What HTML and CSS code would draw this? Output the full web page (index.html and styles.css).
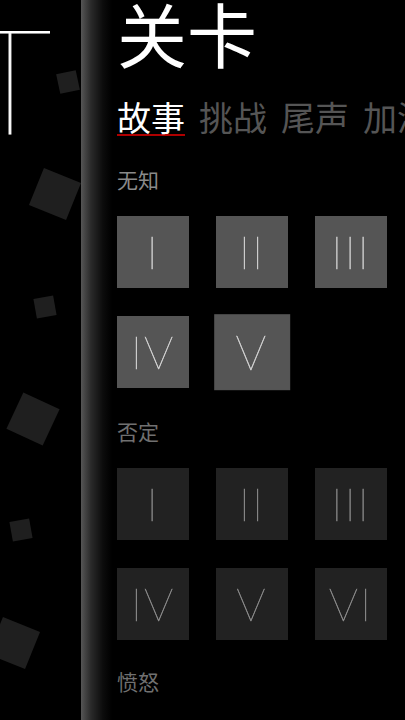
FILE: index.html
```html
<!DOCTYPE html>
<html lang="zh-CN">
<head>
<meta charset="utf-8">
<title>关卡</title>
<link rel="stylesheet" href="styles.css">
</head>
<body>
<div class="app">
  <aside class="canvas">
    <div class="logo">T</div>
    <div class="sq sq-a"></div>
    <div class="sq sq-b"></div>
    <div class="sq sq-c"></div>
    <div class="sq sq-d"></div>
    <div class="sq sq-e"></div>
    <div class="sq sq-f"></div>
  </aside>
  <main class="panel">
    <h1 class="title">关卡</h1>
    <nav class="tabs">
      <span class="tab active">故事</span>
      <span class="tab">挑战</span>
      <span class="tab">尾声</span>
      <span class="tab">加演</span>
    </nav>
    <section class="group">
      <h2 class="label">无知</h2>
      <div class="grid">
        <div class="tile">I</div>
        <div class="tile">II</div>
        <div class="tile">III</div>
        <div class="tile">IV</div>
        <div class="tile current">V</div>
      </div>
    </section>
    <section class="group locked">
      <h2 class="label">否定</h2>
      <div class="grid">
        <div class="tile">I</div>
        <div class="tile">II</div>
        <div class="tile">III</div>
        <div class="tile">IV</div>
        <div class="tile">V</div>
        <div class="tile">VI</div>
      </div>
    </section>
    <section class="group locked last">
      <h2 class="label">愤怒</h2>
    </section>
  </main>
</div>
</body>
</html>
```

FILE: styles.css
```css
* { box-sizing: border-box; }
html, body {
  margin: 0;
  padding: 0;
  background: #000;
}
body {
  width: 405px;
  height: 720px;
  overflow: hidden;
  font-family: "Noto Sans CJK SC", "Noto Sans", sans-serif;
  color: #fff;
}
.app {
  display: flex;
  width: 405px;
  height: 720px;
}
.canvas {
  position: relative;
  width: 81px;
  flex: none;
  overflow: hidden;
}
.logo {
  position: absolute;
  left: -32px;
  top: 4px;
  font-family: "Lato", sans-serif;
  font-weight: 100;
  font-size: 147px;
  line-height: 1;
  color: #fff;
  -webkit-text-stroke: 1px #fff;
  will-change: transform;
}
.sq {
  position: absolute;
  background: #1f1f1f;
}
.sq-a { left: 58px; top: 72px; width: 20px; height: 20px; transform: rotate(-12deg); }
.sq-b { left: 35px; top: 174px; width: 40px; height: 40px; transform: rotate(22deg); }
.sq-c { left: 35px; top: 297px; width: 20px; height: 20px; transform: rotate(-10deg); }
.sq-d { left: 13px; top: 399px; width: 40px; height: 40px; transform: rotate(25deg); }
.sq-e { left: 11px; top: 520px; width: 20px; height: 20px; transform: rotate(-10deg); }
.sq-f { left: -6px; top: 623px; width: 40px; height: 40px; transform: rotate(22deg); }

.panel {
  flex: 1;
  min-width: 0;
  overflow: hidden;
  padding-left: 36px;
  background: linear-gradient(to right, #555 0, #2a2a2a 10px, #0c0c0c 22px, #000 31px);
}
.title {
  margin: -2px 0 0;
  font-size: 70px;
  font-weight: 400;
  line-height: 1;
  color: #fff;
}
.tabs {
  display: flex;
  gap: 14px;
  margin-top: 32px;
  white-space: nowrap;
}
.tab {
  flex: none;
  font-size: 34px;
  line-height: 1;
  color: #555;
}
.tab.active {
  color: #fff;
  text-decoration: underline;
  text-decoration-color: #b00000;
  text-decoration-thickness: 2px;
  text-underline-offset: 3px;
}
.group {
  margin-top: 35px;
}
.group + .group {
  margin-top: 33px;
}
.group.last {
  margin-top: 31px;
}
.label {
  margin: 0;
  font-size: 21px;
  font-weight: 400;
  line-height: 1;
  color: #8a8a8a;
}
.grid {
  display: grid;
  grid-template-columns: repeat(3, 72px);
  column-gap: 27px;
  row-gap: 28px;
  margin-top: 26px;
}
.tile {
  width: 72px;
  height: 72px;
  display: flex;
  align-items: center;
  justify-content: center;
  background: #555;
  color: #d4d4d4;
  font-family: "Lato", sans-serif;
  font-weight: 100;
  font-size: 46px;
  letter-spacing: 2px;
  line-height: 1;
  -webkit-text-stroke: 0.5px currentColor;
  will-change: transform;
}
.tile.current {
  transform: scale(1.05);
}
.locked .label {
  color: #707070;
}
.locked .tile {
  background: #222;
  color: #8c8c8c;
}
```
